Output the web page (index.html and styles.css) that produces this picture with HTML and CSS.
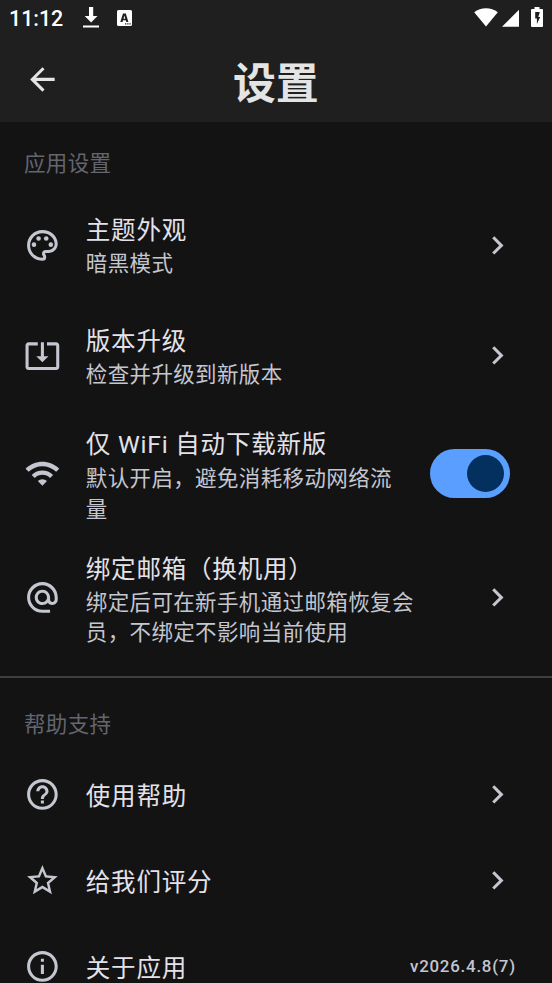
FILE: index.html
```html
<!DOCTYPE html>
<html lang="zh-CN">
<head>
<meta charset="utf-8">
<meta name="viewport" content="width=device-width">
<title>设置</title>
<link rel="stylesheet" href="styles.css">
</head>
<body>
<header class="top">
  <div class="status">
    <span class="time">11:12</span>
    <svg class="st-download" viewBox="0 0 16 22"><path d="M6 0h4.200v9h4.300L8.100 15.500 1.700 9H6zM0 18.600h16v2H0z"/></svg>
    <svg class="st-app" viewBox="0 0 15 16"><path fill-rule="evenodd" d="M1.500 0h12A1.500 1.500 0 0 1 15 1.500v13a1.500 1.500 0 0 1-1.500 1.500h-12A1.500 1.500 0 0 1 0 14.500v-13A1.500 1.500 0 0 1 1.500 0zM6 3.500 3.300 12h2.200l.5-1.700h2.800l.5 1.700h2.100L8.800 3.500zm1.400 2 .9 3.200H6.500zM8 13.300v1.200h1.300v-1.200zm2.200 0v1.200h1.300v-1.200zm2.200 0v1.200h1.300v-1.200z"/></svg>
    <span class="spacer"></span>
    <svg class="st-wifi" viewBox="0 0 24 19"><path d="M12 18.500.2 4.200C3.600 1.600 7.600.2 12 .2s8.400 1.400 11.800 4z"/></svg>
    <svg class="st-signal" viewBox="0 0 18 18"><path d="M0 18 18 0v18z"/></svg>
    <svg class="st-battery" viewBox="0 0 12 20"><path fill-rule="evenodd" d="M3.500 0h5v2H11a1 1 0 0 1 1 1v16a1 1 0 0 1-1 1H1a1 1 0 0 1-1-1V3a1 1 0 0 1 1-1h2.500zM4.200 5v6.500h1.700V17l3.300-7H7.300l1.500-5z"/></svg>
  </div>
  <div class="appbar">
    <svg class="icon back" viewBox="0 0 24 24"><path d="M20 11H7.830l5.590-5.590L12 4l-8 8 8 8 1.410-1.410L7.830 13H20z"/></svg>
    <h1>设置</h1>
  </div>
</header>
<main>
  <h2>应用设置</h2>
  <section>
    <div class="row two">
      <svg class="icon" viewBox="0 0 24 24"><path d="M12 22C6.490 22 2 17.510 2 12S6.490 2 12 2s10 4.040 10 9c0 3.310-2.690 6-6 6h-1.770c-.28 0-.5.220-.5.500 0 .12.050.23.130.33.410.47.640 1.060.640 1.670A2.500 2.500 0 0 1 12 22zm0-18c-4.410 0-8 3.590-8 8s3.590 8 8 8c.28 0 .5-.22.5-.5a.54.54 0 0 0-.14-.35c-.41-.46-.63-1.050-.63-1.650a2.500 2.500 0 0 1 2.500-2.500H16c2.210 0 4-1.790 4-4 0-3.860-3.590-7-8-7z"/><circle cx="6.500" cy="11.500" r="1.500"/><circle cx="9.500" cy="7.500" r="1.500"/><circle cx="14.500" cy="7.500" r="1.500"/><circle cx="17.500" cy="11.500" r="1.500"/></svg>
      <div class="text"><div class="title">主题外观</div><div class="sub">暗黑模式</div></div>
      <svg class="icon" viewBox="0 0 24 24"><path d="M10 6 8.590 7.410 13.170 12l-4.580 4.590L10 18l6-6z"/></svg>
    </div>
    <div class="row two">
      <svg class="icon" viewBox="0 0 24 24"><path d="m12 16.500 4-4h-3v-9h-2v9H8zm9-13h-6v1.990h6v14.030H3V5.490h6V3.500H3c-1.100 0-2 .9-2 2v14c0 1.100.9 2 2 2h18c1.100 0 2-.9 2-2v-14c0-1.100-.9-2-2-2z"/></svg>
      <div class="text"><div class="title">版本升级</div><div class="sub">检查并升级到新版本</div></div>
      <svg class="icon" viewBox="0 0 24 24"><path d="M10 6 8.590 7.410 13.170 12l-4.580 4.590L10 18l6-6z"/></svg>
    </div>
    <div class="row wifi">
      <svg class="icon" viewBox="0 0 24 24"><path d="m1 9 2 2c4.970-4.970 13.030-4.970 18 0l2-2C16.930 2.930 7.080 2.930 1 9zm8 8 3 3 3-3a4.237 4.237 0 0 0-6 0zm-4-4 2 2a7.074 7.074 0 0 1 10 0l2-2C15.140 9.140 8.870 9.140 5 13z"/></svg>
      <div class="text"><div class="title">仅 WiFi 自动下载新版</div><div class="sub">默认开启，避免消耗移动网络流量</div></div>
      <div class="switch"><span class="knob"></span></div>
    </div>
    <div class="row email">
      <svg class="icon" viewBox="0 0 24 24"><path d="M12 2C6.480 2 2 6.480 2 12s4.480 10 10 10h5v-2h-5c-4.340 0-8-3.660-8-8s3.660-8 8-8 8 3.660 8 8v1.430c0 .79-.71 1.570-1.500 1.570s-1.500-.78-1.500-1.570V12c0-2.760-2.240-5-5-5s-5 2.240-5 5 2.240 5 5 5c1.380 0 2.640-.56 3.540-1.470.65.89 1.770 1.470 2.960 1.470 1.970 0 3.500-1.600 3.500-3.570V12c0-5.520-4.480-10-10-10zm0 13c-1.660 0-3-1.340-3-3s1.340-3 3-3 3 1.340 3 3-1.340 3-3 3z"/></svg>
      <div class="text"><div class="title">绑定邮箱（换机用）</div><div class="sub">绑定后可在新手机通过邮箱恢复会员，不绑定不影响当前使用</div></div>
      <svg class="icon" viewBox="0 0 24 24"><path d="M10 6 8.590 7.410 13.170 12l-4.580 4.590L10 18l6-6z"/></svg>
    </div>
  </section>
  <hr>
  <h2>帮助支持</h2>
  <section>
    <div class="row one">
      <svg class="icon" viewBox="0 0 24 24"><path d="M11 18h2v-2h-2zm1-16C6.480 2 2 6.480 2 12s4.480 10 10 10 10-4.480 10-10S17.520 2 12 2zm0 18c-4.410 0-8-3.590-8-8s3.590-8 8-8 8 3.590 8 8-3.590 8-8 8zm0-14c-2.210 0-4 1.790-4 4h2c0-1.100.9-2 2-2s2 .9 2 2c0 2-3 1.750-3 5h2c0-2.250 3-2.500 3-5 0-2.210-1.790-4-4-4z"/></svg>
      <div class="text"><div class="title">使用帮助</div></div>
      <svg class="icon" viewBox="0 0 24 24"><path d="M10 6 8.590 7.410 13.170 12l-4.580 4.590L10 18l6-6z"/></svg>
    </div>
    <div class="row one">
      <svg class="icon" viewBox="0 0 24 24"><path d="m22 9.240-7.190-.62L12 2 9.190 8.630 2 9.240l5.460 4.730L5.820 21 12 17.270 18.180 21l-1.630-7.030zM12 15.400l-3.760 2.270 1-4.280-3.320-2.880 4.380-.38L12 6.100l1.710 4.040 4.380.38-3.320 2.880 1 4.280z"/></svg>
      <div class="text"><div class="title">给我们评分</div></div>
      <svg class="icon" viewBox="0 0 24 24"><path d="M10 6 8.590 7.410 13.170 12l-4.580 4.590L10 18l6-6z"/></svg>
    </div>
    <div class="row one">
      <svg class="icon" viewBox="0 0 24 24"><path d="M11 7h2v2h-2zm0 4h2v6h-2zm1-9C6.480 2 2 6.480 2 12s4.480 10 10 10 10-4.480 10-10S17.520 2 12 2zm0 18c-4.410 0-8-3.590-8-8s3.590-8 8-8 8 3.590 8 8-3.590 8-8 8z"/></svg>
      <div class="text"><div class="title">关于应用</div></div>
      <span class="version">v2026.4.8(7)</span>
    </div>
  </section>
</main>
</body>
</html>
```

FILE: styles.css
```css
* { box-sizing: border-box; }
html, body { height: 983px; overflow: hidden; }
body {
  margin: 0;
  background: #131313;
  color: #e4e2e9;
  font-family: Roboto, "Noto Sans CJK SC", sans-serif;
}
svg { display: block; flex: none; }
.top { height: 122px; background: #1f1f1f; }
.status {
  display: flex;
  align-items: flex-start;
  height: 36px;
  padding: 7px 9px 0 9px;
  color: #fff;
  fill: #fff;
}
.time { width: 74px; font-size: 21.400px; font-weight: 500; line-height: 23px; letter-spacing: 0; }
.st-download { width: 16px; height: 22px; }
.st-app { width: 15px; height: 16px; margin: 2.500px 0 0 18px; }
.spacer { flex: 1; }
.st-wifi { width: 24px; height: 19px; margin: 0.500px 4px 0 0; }
.st-signal { width: 17.500px; height: 18px; margin: 2px 12px 0 0; }
.st-battery { width: 12px; height: 20px; }
.appbar {
  display: grid;
  grid-template-columns: 37px 1fr 37px;
  align-items: center;
  height: 86px;
  padding: 0 24px 0 23.600px;
}
h1 {
  margin: 10px 0 0;
  color: #e4e4e4;
  font-size: 42.900px;
  font-weight: 700;
  line-height: 56px;
  text-align: center;
}
.icon { width: 36.800px; height: 36.800px; fill: #c4c6d0; }
.back { fill: #e4e4e4; }
h2 {
  height: 68px;
  margin: 0;
  padding: 26px 24px 0;
  color: #63666f;
  font-size: 21.470px;
  font-weight: 400;
  line-height: 31px;
  letter-spacing: 0.380px;
}
.row { display: flex; align-items: center; padding: 0 36.200px 0 23.600px; }
.two { height: 110.400px; }
.wifi { height: 125.400px; }
.email { height: 121.600px; }
.one { height: 86px; }
.text { flex: 1; min-width: 0; padding-left: 25.400px; padding-right: 24px; }
.two .text { padding-top: 2px; }
.two .title { margin: 1px 0 -1px; }
.wifi .text { padding-top: 5.500px; padding-right: 36px; }
.email .text { padding-top: 6px; }
.email .title { margin: 1px 0 -1px; }
.one .text { padding-top: 6px; }
.title { font-size: 24.530px; line-height: 36.800px; letter-spacing: 0.800px; }
.sub { color: #c4c6d0; font-size: 21.470px; line-height: 30.800px; letter-spacing: 0.400px; }
.switch {
  display: flex;
  flex: none;
  align-items: center;
  justify-content: flex-end;
  width: 80px;
  height: 49px;
  margin-right: 5.800px;
  padding-right: 6px;
  border-radius: 25px;
  background: #5a9eff;
}
.knob { width: 37px; height: 37px; border-radius: 50%; background: #04305f; }
hr { height: 2px; margin: 18.200px 0 5px; border: 0; background: #3b3e42; }
.version { color: #c4c6d0; font-size: 16.870px; font-weight: 500; letter-spacing: 0.770px; }
```
